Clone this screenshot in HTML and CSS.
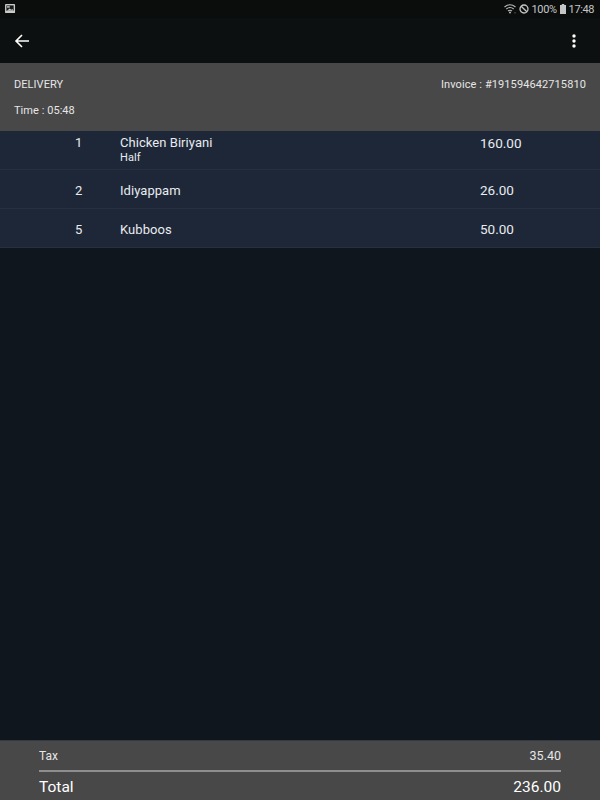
FILE: index.html
```html
<!DOCTYPE html>
<html lang="en">
<head>
    <meta charset="UTF-8">
    <meta name="viewport" content="width=device-width, initial-scale=1.0">
    <title>Order Details</title>
    <link rel="stylesheet" href="styles.css">
</head>
<body>

<div class="page">
    <div class="statusbar">
        <svg class="pic-icon" viewBox="0 0 12 11" width="11" height="10">
            <rect x="0" y="0" width="11" height="10" rx="1" fill="#c9cbcb"/>
            <rect x="1.5" y="1.5" width="8" height="6" fill="#1a1c1c"/>
            <rect x="2.2" y="2.4" width="3" height="1.6" fill="#c9cbcb"/>
            <path d="M2 7.5 L5 5 L7 6.4 L8 5.6 L9.5 7.5 Z" fill="#c9cbcb"/>
        </svg>
        <div class="status-right">
            <svg viewBox="0 0 12 10" width="12" height="10">
                <path d="M0.5 3 Q6 -1.5 11.5 3 M2.3 5 Q6 2 9.7 5 M4 7 Q6 5.4 8 7" fill="none" stroke="#b9bbbb" stroke-width="1.1"/>
                <circle cx="6" cy="8.6" r="1" fill="#b9bbbb"/>
                <circle cx="11" cy="8.8" r="0.6" fill="#8a8c8c"/>
            </svg>
            <svg viewBox="0 0 10 10" width="10" height="10">
                <circle cx="5" cy="5" r="4" fill="none" stroke="#c4c6c6" stroke-width="1.3"/>
                <path d="M2.2 2.2 L7.8 7.8" stroke="#c4c6c6" stroke-width="1.3"/>
            </svg>
            <span class="status-text">100%</span>
            <svg viewBox="0 0 6 10" width="6" height="10">
                <rect x="1.8" y="0" width="2.4" height="1.2" fill="#c4c6c6"/>
                <rect x="0" y="1" width="6" height="9" fill="#c4c6c6"/>
            </svg>
            <span class="status-text">17:48</span>
        </div>
    </div>

    <div class="appbar">
        <svg viewBox="0 0 16 16" width="16" height="16">
            <path d="M15 8 H2 M8 2 L2 8 L8 14" fill="none" stroke="#fff" stroke-width="1.6"/>
        </svg>
        <svg viewBox="0 0 4 16" width="4" height="16">
            <circle cx="2" cy="3" r="1.7" fill="#fff"/>
            <circle cx="2" cy="8" r="1.7" fill="#fff"/>
            <circle cx="2" cy="13" r="1.7" fill="#fff"/>
        </svg>
    </div>

    <div class="order-head">
        <div class="head-row">
            <span>DELIVERY</span>
            <span class="invoice">Invoice : #191594642715810</span>
        </div>
        <div class="head-time">Time : 05:48</div>
    </div>

    <div class="items">
        <div class="item item-top">
            <div class="qty">1</div>
            <div class="name">
                Chicken Biriyani
                <div class="variant">Half</div>
            </div>
            <div class="price">160.00</div>
        </div>
        <div class="item">
            <div class="qty">2</div>
            <div class="name">Idiyappam</div>
            <div class="price">26.00</div>
        </div>
        <div class="item">
            <div class="qty">5</div>
            <div class="name">Kubboos</div>
            <div class="price">50.00</div>
        </div>
    </div>

    <div class="totals">
        <div class="tax-row">
            <span>Tax</span>
            <span class="tax-value">35.40</span>
        </div>
        <div class="total-row">
            <span>Total</span>
            <span class="total-value">236.00</span>
        </div>
    </div>
</div>

</body>
</html>
```

FILE: styles.css
```css
* {
    box-sizing: border-box;
    margin: 0;
    padding: 0;
}

body {
    font-family: 'Roboto', sans-serif;
    background-color: #0f161e;
    color: #fff;
}

.page {
    width: 600px;
    height: 800px;
    display: flex;
    flex-direction: column;
    overflow: hidden;
}

.statusbar {
    height: 18px;
    background-color: #0b0d0d;
    display: flex;
    justify-content: space-between;
    align-items: center;
    padding: 0 6px 0 5px;
}

.status-right {
    display: flex;
    align-items: center;
    gap: 3px;
}

.status-text {
    font-size: 11px;
    letter-spacing: -0.4px;
    color: #c4c6c6;
}

.appbar {
    height: 45px;
    background-color: #0d1010;
    display: flex;
    justify-content: space-between;
    align-items: center;
    padding: 0 24px 0 14px;
    box-shadow: 0 1px 1px rgba(0, 0, 0, 0.5);
}

.order-head {
    height: 68px;
    background-color: #484848;
    padding: 15px 14px 0;
    font-size: 11px;
    letter-spacing: 0.05px;
    color: #e6e6e6;
}

.head-row {
    display: flex;
    justify-content: space-between;
}

.invoice {
    letter-spacing: 0.1px;
}

.head-time {
    margin-top: 13px;
}

.items {
    flex: 1;
}

.item {
    height: 39px;
    background-color: #1d2737;
    border-bottom: 1px solid #263041;
    display: flex;
    align-items: center;
    padding-top: 2px;
    font-size: 13px;
    color: #e9ebef;
}

.item-top {
    align-items: flex-start;
    padding-top: 4px;
}

.qty {
    width: 120px;
    padding-left: 75px;
    font-size: 13px;
}

.name {
    width: 360px;
    letter-spacing: 0.05px;
}

.variant {
    font-size: 11px;
    margin-top: 1px;
}

.price {
    font-size: 13.5px;
}

.totals {
    height: 60px;
    background-color: #484848;
    border-top: 1px solid #333b47;
    padding: 0 39px;
}

.tax-row {
    height: 31px;
    display: flex;
    justify-content: space-between;
    align-items: center;
    font-size: 12px;
    color: #e6e6e6;
    border-bottom: 2px solid #8e8e8e;
}

.tax-value {
    font-size: 12.5px;
}

.total-row {
    display: flex;
    justify-content: space-between;
    align-items: center;
    height: 28px;
    padding-top: 2px;
    font-size: 15.5px;
}
```
